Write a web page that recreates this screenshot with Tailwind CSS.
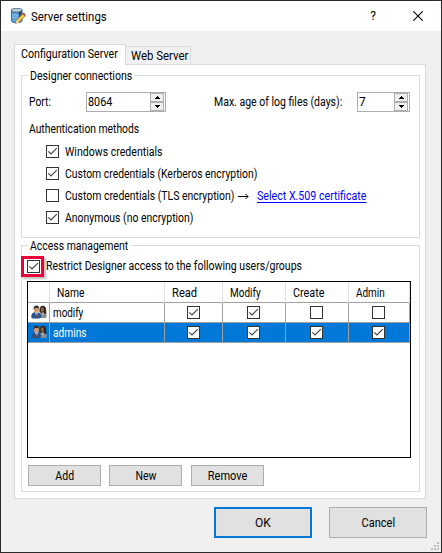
<!DOCTYPE html>
<html lang="en">
<head>
<meta charset="utf-8">
<title>Server settings</title>
<script src="https://cdn.jsdelivr.net/npm/@tailwindcss/browser@4"></script>
</head>
<body class="overflow-hidden">
<svg class="hidden">
  <symbol id="on" viewBox="0 0 13 13"><rect x=".5" y=".5" width="12" height="12" fill="#fff" stroke="#333"/><path d="M2.3 6.3 5 9 10.8 3.2" fill="none" stroke="#444" stroke-width="1.2"/></symbol>
  <symbol id="off" viewBox="0 0 13 13"><rect x=".5" y=".5" width="12" height="12" fill="#fff" stroke="#333"/></symbol>
  <symbol id="users" viewBox="0 0 16 14">
    <path d="M8 13V9.500Q9 7 11.500 7 15.500 7.500 15.800 11L15 13Z" fill="#8b8f94"/>
    <path d="M8.500 7Q8 1 11.500 .7 15 .8 15 4.500L15.500 8.500 12 9Z" fill="#30241f"/>
    <ellipse cx="11.300" cy="4.700" rx="1.700" ry="2.400" fill="#8a5f45"/>
    <path d="M10.500 8.500 12 10 13 8 12 7Z" fill="#d8c8bb"/>
    <path d="M.3 12.500Q0 8 3.500 7.300L7 7.300Q10 8 10.300 12L8.500 13.600H1.500Z" fill="#1f568f"/>
    <path d="M4 7.200 5.700 12 7.200 7.200Z" fill="#e9f2fa"/><path d="M5.400 8.300h.9l.3 3.500-.8.900-.7-.9Z" fill="#8b3940"/>
    <ellipse cx="5.400" cy="4.400" rx="2.500" ry="3.200" fill="#d39a70"/>
    <path d="M2.600 4.800Q2 .9 5.400 .6 8.500 .9 8.200 4.400L7.300 2.900 4 3Z" fill="#35322c"/>
  </symbol>
  <symbol id="spin" viewBox="0 0 14 18">
    <rect x=".5" y=".5" width="13" height="8" fill="#f0f0f0" stroke="#b0b0b0"/><rect x=".5" y="9.500" width="13" height="8" fill="#f0f0f0" stroke="#b0b0b0"/>
    <path d="M7 3h1v1h1v1h1v1H5V5h1V4h1ZM5 12h5v1H9v1H8v1H7v-1H6v-1H5Z" fill="#000" shape-rendering="crispEdges"/>
  </symbol>
</svg>
<div class="w-[442px] h-[553px] bg-[#f0f0f0] border border-[#2d2a2d] flex flex-col text-[12px] leading-[16px] text-black whitespace-nowrap font-['Roboto','Liberation_Sans',sans-serif]">
  <header class="h-[30px] shrink-0 bg-white flex items-center pl-[9px] pr-[18px]">
    <svg class="w-4 h-4 shrink-0" viewBox="0 0 16 16">
      <path d="M1 2 3.500 .5H10.500L12.500 2V13L10 15H3L1 13Z" fill="#376f9f"/>
      <path d="M1 2 3.500 .5H10.500L12.500 2 10 4H3Z" fill="#b5cddd" stroke="#4b6576" stroke-width=".7"/>
      <path d="M2 4.500 8.500 5V14H3.500L2 12.500Z" fill="#5ca4d8"/><path d="M9 4 12 2.500V12L9 14Z" fill="#284b70"/>
      <path d="M2 6.500 8.500 7.500M2 9 8.500 10" stroke="#8cc6ed" stroke-width=".8"/>
      <path d="m5.500 15.500 1.300-3.600 6.100-6.400 2.600 2.300-6.400 6.500Z" fill="#f2c94b" stroke="#80662a" stroke-width=".7"/>
      <path d="m12.300 6 1.300-1.400 2.200 2-1.300 1.500Z" fill="#b04a3d"/><path d="m5.500 15.500 1.300-3.600 2.300 2.400Z" fill="#f1dfb9"/>
    </svg>
    <h1 class="ml-[5px] mt-[1px] origin-left scale-x-[.95]">Server settings</h1>
    <span class="ml-auto w-[8px] text-center">?</span>
    <svg class="ml-[36px] w-[10px] h-[10px]" viewBox="0 0 10 10"><path d="M.3 .3 9.700 9.700M9.700 .3 .3 9.700" stroke="#000" stroke-width="1.100"/></svg>
  </header>
  <nav class="mt-[13px] ml-[13px] h-[20px] shrink-0 flex items-end">
    <div class="w-[112px] h-[21px] -mb-px relative z-10 bg-white border border-b-0 border-[#d9d9d9] pl-[6px] pt-[1px]"><span class="inline-block origin-left scale-x-[.89]">Configuration Server</span></div>
    <div class="w-[65px] h-[18px] border border-l-0 border-b-0 border-[#d9d9d9] pl-[5px] pt-[1px]"><span class="inline-block origin-left scale-x-[.95]">Web Server</span></div>
  </nav>
  <main class="ml-[13px] w-[412px] h-[435px] shrink-0 bg-white border border-[#d9d9d9] px-[6px] pt-[10px]">
    <section class="w-[399px] h-[163px] border border-[#dcdcdc]">
      <h2 class="-mt-[8px] ml-[6px] px-[2px] w-[107px] h-[16px] bg-white"><span class="inline-block origin-left scale-x-[.885]">Designer connections</span></h2>
      <div class="mt-[8px] h-[20px] pl-[7px] flex items-center">
        <span class="w-[57px]"><span class="inline-block origin-left scale-x-[.86]">Port:</span></span>
        <div class="w-[80px] h-[20px] border border-[#abadb3] flex items-center pl-px pr-px"><span class="inline-block origin-left scale-x-[.9]">8064</span><svg class="ml-auto w-[14px] h-[18px]"><use href="#spin"/></svg></div>
        <span class="ml-[48px] w-[143px]"><span class="inline-block origin-left scale-x-[.875]">Max. age of log files (days):</span></span>
        <div class="w-[53px] h-[20px] border border-[#abadb3] flex items-center pl-px pr-px"><span>7</span><svg class="ml-auto w-[14px] h-[18px]"><use href="#spin"/></svg></div>
      </div>
      <h3 class="mt-[9px] ml-[7px]"><span class="inline-block origin-left scale-x-[.86]">Authentication methods</span></h3>
      <div class="mt-[4px] ml-[24px] flex flex-col">
        <label class="h-[22px] flex items-center"><svg class="w-[13px] h-[13px] mr-[6px] mb-px"><use href="#on"/></svg><span class="inline-block origin-left scale-x-[.88]">Windows credentials</span></label>
        <label class="h-[22px] flex items-center"><svg class="w-[13px] h-[13px] mr-[6px] mb-px"><use href="#on"/></svg><span class="inline-block origin-left scale-x-[.867]">Custom credentials (Kerberos encryption)</span></label>
        <label class="h-[22px] flex items-center"><svg class="w-[13px] h-[13px] mr-[6px] mb-px"><use href="#off"/></svg><span class="w-[173px]"><span class="inline-block origin-left scale-x-[.87]">Custom credentials (TLS encryption)</span></span><svg class="w-[11px] h-[7px]" viewBox="0 0 11 7"><path d="M0 3.500H10M7.500 1 10 3.500 7.500 6" fill="none" stroke="#000"/></svg><a class="ml-[8px] text-[#0000ff] underline underline-offset-2 inline-block origin-left scale-x-[.887]">Select X.509 certificate</a></label>
        <label class="h-[22px] flex items-center"><svg class="w-[13px] h-[13px] mr-[6px] mb-px"><use href="#on"/></svg><span class="inline-block origin-left scale-x-[.87]">Anonymous (no encryption)</span></label>
      </div>
    </section>
    <section class="mt-[7px] w-[399px] h-[247px] border border-[#dcdcdc]">
      <h2 class="-mt-[8px] ml-[6px] px-[2px] w-[103px] h-[16px] bg-white"><span class="inline-block origin-left scale-x-[.87]">Access management</span></h2>
      <div class="h-[25px] mt-[2px] -ml-px flex items-start">
        <div class="w-[23px] h-[21px] border-3 border-[#eb0038] shadow-[2px_2px_2px_#0004] pl-[3px] pt-px"><svg class="w-[13px] h-[13px]"><use href="#on"/></svg></div><span class="ml-[2px] mt-[2px] inline-block origin-left scale-x-[.877]">Restrict Designer access to the following users/groups</span>
      </div>
      <div class="ml-[5px] w-[384px] h-[177px] border border-black">
        <div class="grid grid-cols-[22px_115px_58px_63px_63px_61px] h-[21px] border-b border-[#a0a0a0] leading-[22px]">
          <div class="border-r border-[#e2e2e2]"></div>
          <div class="border-r border-[#e2e2e2] pl-[7px]"><span class="inline-block origin-left scale-x-[.86]">Name</span></div>
          <div class="border-r border-[#e2e2e2] pl-[7px]"><span class="inline-block origin-left scale-x-[.93]">Read</span></div>
          <div class="border-r border-[#e2e2e2] pl-[7px]"><span class="inline-block origin-left scale-x-[.83]">Modify</span></div>
          <div class="border-r border-[#e2e2e2] pl-[7px]"><span class="inline-block origin-left scale-x-[.9]">Create</span></div>
          <div class="border-r border-[#e2e2e2] pl-[7px]"><span class="inline-block origin-left scale-x-[.83]">Admin</span></div>
        </div>
        <div class="grid grid-cols-[22px_115px_58px_63px_63px_61px] h-[20px] border-b border-[#a0a0a0] leading-[20px] *:border-r *:border-[#a0a0a0]">
          <div class="pl-[3px] pt-[2px]"><svg class="w-4 h-[14px]"><use href="#users"/></svg></div>
          <div class="pl-[3px]"><span class="inline-block origin-left scale-x-[.82]">modify</span></div>
          <div class="pl-[22px] pt-[3px]"><svg class="w-[13px] h-[13px]"><use href="#on"/></svg></div>
          <div class="pl-[24px] pt-[3px]"><svg class="w-[13px] h-[13px]"><use href="#on"/></svg></div>
          <div class="pl-[24px] pt-[3px]"><svg class="w-[13px] h-[13px]"><use href="#off"/></svg></div>
          <div class="pl-[23px] pt-[3px]"><svg class="w-[13px] h-[13px]"><use href="#off"/></svg></div>
        </div>
        <div class="grid grid-cols-[22px_115px_58px_63px_63px_61px] h-[20px] w-[382px] bg-[#0078d7] text-white border-b border-[#a0a0a0] leading-[20px] *:border-r *:border-[#a0a0a0]">
          <div class="pl-[3px] pt-[2px]"><svg class="w-4 h-[14px]"><use href="#users"/></svg></div>
          <div class="pl-[3px]"><span class="inline-block origin-left scale-x-[.85]">admins</span></div>
          <div class="pl-[22px] pt-[3px]"><svg class="w-[13px] h-[13px]"><use href="#on"/></svg></div>
          <div class="pl-[24px] pt-[3px]"><svg class="w-[13px] h-[13px]"><use href="#on"/></svg></div>
          <div class="pl-[24px] pt-[3px]"><svg class="w-[13px] h-[13px]"><use href="#on"/></svg></div>
          <div class="pl-[23px] pt-[3px]"><svg class="w-[13px] h-[13px]"><use href="#on"/></svg></div>
        </div>
      </div>
      <div class="mt-[7px] ml-[6px] flex">
        <button class="w-[73px] h-[21px] bg-[#e1e1e1] border border-[#adadad]"><span class="inline-block scale-x-[.88]">Add</span></button>
        <button class="ml-[8px] w-[73px] h-[21px] bg-[#e1e1e1] border border-[#adadad]"><span class="inline-block scale-x-[.88]">New</span></button>
        <button class="ml-[9px] w-[73px] h-[21px] bg-[#e1e1e1] border border-[#adadad]"><span class="inline-block scale-x-[.92]">Remove</span></button>
      </div>
    </section>
  </main>
  <footer class="mt-[8px] pl-[213px] flex">
    <button class="w-[98px] h-[31px] bg-[#e1e1e1] border-2 border-[#0078d7]"><span>OK</span></button>
    <button class="ml-[17px] w-[98px] h-[31px] bg-[#e1e1e1] border border-[#adadad]"><span class="inline-block scale-x-[.92]">Cancel</span></button>
  </footer>
  <svg class="w-[8px] h-[8px] mt-[4px] ml-[430px] shrink-0" viewBox="0 0 8 8"><path d="M6 0h2v2H6ZM3 3h2v2H3ZM6 3h2v2H6ZM0 6h2v2H0ZM3 6h2v2H3ZM6 6h2v2H6Z" fill="#bfbfbf"/></svg>
</div>
</body>
</html>
